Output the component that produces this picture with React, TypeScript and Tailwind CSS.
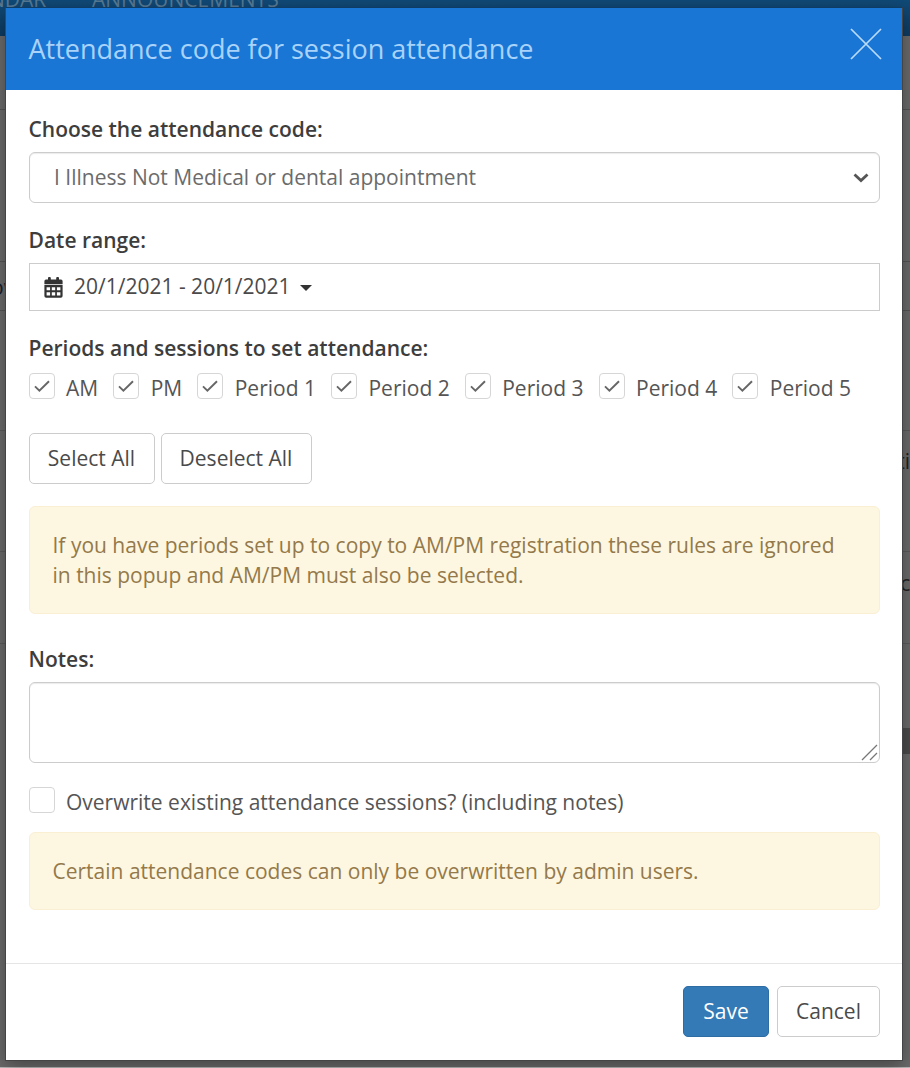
const SESSIONS = ["AM", "PM", "Period 1", "Period 2", "Period 3", "Period 4", "Period 5"];

function CalendarIcon() {
  return (
    <svg width="19" height="21" viewBox="0 0 19 21" fill="#333">
      <path d="M2 2.6h2V1a1 1 0 0 1 1-1h.8a1 1 0 0 1 1 1v1.6h5.4V1a1 1 0 0 1 1-1h.8a1 1 0 0 1 1 1v1.6h2a1.6 1.6 0 0 1 1.6 1.6v3H.4v-3A1.6 1.6 0 0 1 2 2.6Z" />
      <path
        fillRule="evenodd"
        d="M.4 8h18.2v11a1.8 1.8 0 0 1-1.8 1.8H2.2A1.8 1.8 0 0 1 .4 19ZM2.6 10.2v3.1h3.5v-3.1Zm5.2 0v3.1h3.4v-3.1Zm5.1 0v3.1h3.5v-3.1ZM2.6 15.2v3.3h3.5v-3.3Zm5.2 0v3.3h3.4v-3.3Zm5.1 0v3.3h3.5v-3.3Z"
      />
    </svg>
  );
}

function Label({ children }: { children: string }) {
  return <div className="h-[30px] leading-[30px] -mt-[0.5px] mb-[0.5px] font-semibold text-[#3d3d3d]">{children}</div>;
}

function Checkbox({ label, checked }: { label: string; checked?: boolean }) {
  return (
    <label className="flex items-start whitespace-nowrap">
      <span className="size-[26px] shrink-0 rounded-[4px] border-[1.5px] border-[#d6d6d6] bg-white flex items-center justify-center">
        {checked && (
          <svg width="16" height="14" viewBox="0 0 16 14" fill="none" stroke="#666" strokeWidth="1.9">
            <path d="M1 7.4 5.4 11.6 15 2.2" />
          </svg>
        )}
      </span>
      <span className="ml-[11.5px] h-[30px] leading-[30px]">{label}</span>
    </label>
  );
}

function Button({ children, className }: { children: string; className: string }) {
  return (
    <button type="button" className={`h-[51px] rounded-[5px] border-[1.5px] ${className}`}>
      {children}
    </button>
  );
}

function Alert({ children, className }: { children: string; className: string }) {
  return (
    <div className={`rounded-[6px] border-[1.5px] border-[#faefd3] bg-[#fdf7e2] pl-[23px] pr-6 leading-[30px] text-[#94794a] ${className}`}>
      {children}
    </div>
  );
}

function PageBehind() {
  return (
    <div className="flex h-full flex-col bg-[#6b6b6b] border-b border-[#bbb]">
      <div className="flex h-9 shrink-0 items-start overflow-hidden bg-gradient-to-b from-[#104a78] to-[#0e3c62] text-[21px] leading-5 text-[#587a94]">
        <span className="-mt-[11px] -ml-[11px] w-[103px]">NDAR</span>
        <span className="-mt-[11px]">ANNOUNCEMENTS</span>
      </div>
      <div className="h-[74px] border-b border-[#555]" />
      <div className="h-[152px] border-b border-[#555]" />
      <div className="h-[49px] border-b border-[#555] -ml-[9px] leading-[50px] text-[#16202f]">ow</div>
      <div className="h-[120px] border-b border-[#5b5b5b]" />
      <div className="h-[121px] border-b border-[#5b5b5b] pt-[15px] text-right leading-[30px] text-[#222]">ti</div>
      <div className="h-[92px] border-b border-[#5b5b5b] pt-[16px] -mr-[12px] text-right leading-[30px] text-[#222]">ca</div>
      <div className="h-[84px]" />
      <div className="flex h-[26px] justify-end">
        <div className="w-6 bg-[#4b4b4b]" />
      </div>
    </div>
  );
}

export default function App() {
  return (
    <div className="relative h-[1068px] w-[910px] overflow-hidden font-['Open_Sans',sans-serif] text-[21px] text-[#555]">
      <PageBehind />
      <div className="absolute top-[7px] left-[5px] flex h-[1054px] w-[898px] flex-col border border-[#444] border-t-[#0d3d66] bg-white shadow-[0_6px_18px_rgba(0,0,0,0.35)]">
        <div className="flex h-[82px] shrink-0 justify-between bg-[#1976d5] pl-[22.5px] pr-[20px] text-[#a9d3fa]">
          <h1 className="mt-[21px] h-10 leading-10 text-[27px]">Attendance code for session attendance</h1>
          <svg className="mt-[20px]" width="32" height="32" viewBox="0 0 32 32" stroke="#b9dcfb" strokeWidth="1.7">
            <path d="M1 1 31 31M31 1 1 31" />
          </svg>
        </div>

        <div className="flex flex-col pl-[22.5px] pr-[22px] pt-[24px]">
          <Label>Choose the attendance code:</Label>
          <div className="mt-[8px] flex h-[51px] items-center justify-between rounded-[6px] border-[1.5px] border-[#ccc] pl-[24.5px] pr-[10px] shadow-[inset_0_1px_1px_rgba(0,0,0,0.08)] text-[#6b6b6b]">
            <span className="pt-px">I Illness Not Medical or dental appointment</span>
            <svg width="16" height="10" viewBox="0 0 16 10" fill="none" stroke="#555" strokeWidth="2.8">
              <path d="M1.5 1.5 8 7.5 14.5 1.5" />
            </svg>
          </div>

          <div className="mt-[22px]">
            <Label>Date range:</Label>
          </div>
          <div className="mt-[8px] flex h-[48px] items-center border-[1.5px] border-[#ccc] pl-[14.5px] text-[#4a4a4a]">
            <span className="mt-px">
              <CalendarIcon />
            </span>
            <span className="ml-[11px]">20/1/2021 - 20/1/2021</span>
            <span className="ml-[9.5px] mt-px border-x-[6px] border-t-[6px] border-x-transparent border-t-[#333]" />
          </div>

          <div className="mt-[22px]">
            <Label>Periods and sessions to set attendance:</Label>
          </div>
          <div className="mt-[10px] flex h-[31px] gap-[15px]">
            {SESSIONS.map((s) => (
              <Checkbox key={s} label={s} checked />
            ))}
          </div>

          <div className="mt-[29px] flex gap-[6px]">
            <Button className="w-[126px] border-[#ccc] text-[#4a4a4a]">Select All</Button>
            <Button className="w-[151px] border-[#ccc] text-[#4a4a4a]">Deselect All</Button>
          </div>

          <Alert className="mt-[22px] h-[108px] pt-[23px]">
            If you have periods set up to copy to AM/PM registration these rules are ignored in this popup and AM/PM must also be selected.
          </Alert>

          <div className="mt-[30px]">
            <Label>Notes:</Label>
          </div>
          <div className="mt-[8px] flex h-[81px] items-end justify-end rounded-[6px] border-[1.5px] border-[#ccc] pr-[1px] pb-[1px] shadow-[inset_0_1px_1px_rgba(0,0,0,0.08)]">
            <svg width="17" height="17" viewBox="0 0 17 17" stroke="#777" strokeWidth="1.3">
              <path d="M1 16 16 1M9 16 16 9" />
            </svg>
          </div>

          <div className="mt-[24px] h-[31px]">
            <Checkbox label="Overwrite existing attendance sessions? (including notes)" />
          </div>
          <Alert className="mt-[14px] h-[78px] pt-[23px]">
            Certain attendance codes can only be overwritten by admin users.
          </Alert>
        </div>

        <div className="mt-[53px] flex justify-end gap-2 border-t-[1.5px] border-[#e5e5e5] px-[22px] pt-[22px]">
          <Button className="w-[86px] border-[#2e6da4] bg-[#337ab7] text-white">Save</Button>
          <Button className="w-[103px] border-[#ccc] text-[#4a4a4a]">Cancel</Button>
        </div>
      </div>
    </div>
  );
}
